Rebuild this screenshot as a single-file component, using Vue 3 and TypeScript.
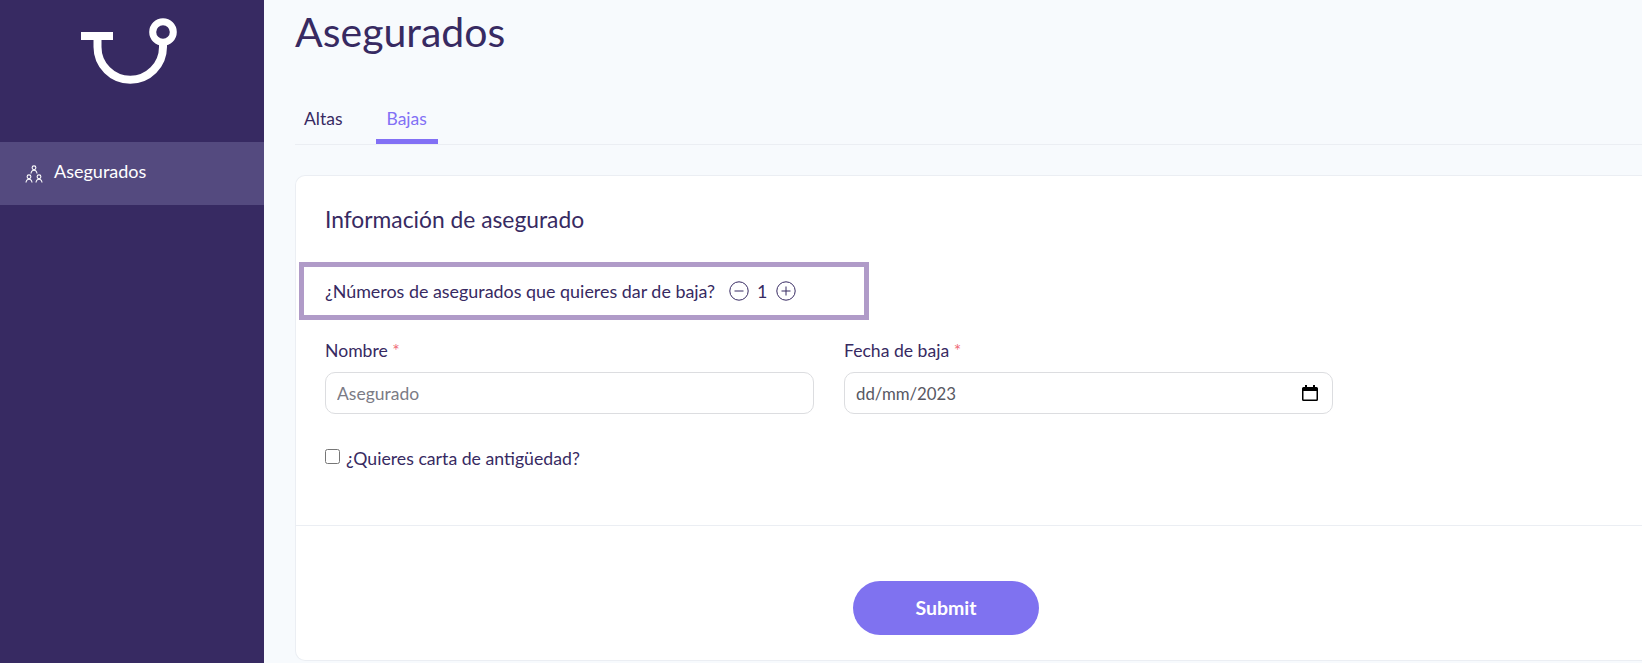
<template>
  <div class="page">
    <aside class="sidebar">
      <div class="logo">
        <svg width="100" height="90" viewBox="0 0 100 90" fill="none">
          <path d="M1 28h32v8H1z" fill="#fff" />
          <path d="M17.500 32v11a32.750 32.750 0 0 0 65.500 0V28" stroke="#fff" stroke-width="8" />
          <circle cx="83" cy="28" r="10.300" stroke="#fff" stroke-width="7" fill="#372a62" />
        </svg>
      </div>
      <a class="nav-item">
        <svg class="nav-icon" width="20" height="20" viewBox="0 0 20 20" fill="none" stroke="#fff" stroke-width="1.100">
          <circle cx="10" cy="3.800" r="1.900" />
          <path d="M7 9.500c.2-2 1.300-3.300 3-3.300s2.800 1.300 3 3.300" />
          <circle cx="5" cy="12.800" r="1.900" />
          <path d="M2 18.500c.2-2 1.300-3.300 3-3.300s2.800 1.300 3 3.300" />
          <circle cx="15" cy="12.800" r="1.900" />
          <path d="M12 18.500c.2-2 1.300-3.300 3-3.300s2.800 1.300 3 3.300" />
        </svg>
        <span>Asegurados</span>
      </a>
    </aside>

    <main class="content">
      <h1 class="titulo">Asegurados</h1>

      <nav class="tabs">
        <a
          v-for="tab in tabs"
          :key="tab"
          class="tab"
          :class="{ activa: tab === tabActiva }"
          @click="tabActiva = tab"
        >
          {{ tab }}
        </a>
      </nav>

      <section class="card">
        <h2 class="card-titulo">Información de asegurado</h2>

        <div class="contador">
          <span>¿Números de asegurados que quieres dar de baja?</span>
          <button class="circulo" type="button" @click="restar">
            <svg width="20" height="20" viewBox="0 0 20 20" fill="none" stroke="#372a62" stroke-width="1">
              <circle cx="10" cy="10" r="9.200" />
              <path d="M5.500 10h9" />
            </svg>
          </button>
          <span class="numero">{{ cantidad }}</span>
          <button class="circulo" type="button" @click="cantidad++">
            <svg width="20" height="20" viewBox="0 0 20 20" fill="none" stroke="#372a62" stroke-width="1">
              <circle cx="10" cy="10" r="9.200" />
              <path d="M5.500 10h9M10 5.500v9" />
            </svg>
          </button>
        </div>

        <div class="campos">
          <label class="campo">
            <span class="etiqueta">Nombre <i>*</i></span>
            <input class="entrada" type="text" placeholder="Asegurado" />
          </label>
          <label class="campo">
            <span class="etiqueta">Fecha de baja <i>*</i></span>
            <span class="entrada fecha">
              <input type="text" value="dd/mm/2023" />
              <svg width="16" height="16" viewBox="0 0 16 16">
                <path d="M3 0h2v2h6V0h2v2h1.500A1.500 1.500 0 0 1 16 3.500v11a1.500 1.500 0 0 1-1.500 1.500h-13A1.500 1.500 0 0 1 0 14.500v-11A1.500 1.500 0 0 1 1.500 2H3zM1.500 6v8.500h13V6z" fill="#000" />
              </svg>
            </span>
          </label>
        </div>

        <label class="check">
          <input type="checkbox" />
          <span>¿Quieres carta de antigüedad?</span>
        </label>

        <div class="pie">
          <button class="enviar" type="button">Submit</button>
        </div>
      </section>
    </main>
  </div>
</template>

<script setup lang="ts">
import { ref } from "vue"

const tabs = ["Altas", "Bajas"]
const tabActiva = ref("Bajas")
const cantidad = ref(1)

function restar() {
  if (cantidad.value > 1) cantidad.value--
}
</script>

<style>
html,
body {
  margin: 0;
  overflow: hidden;
}
</style>

<style scoped>
.page {
  display: flex;
  width: 1642px;
  height: 663px;
  overflow: hidden;
  background: #f7fafd;
  font-family: Lato, "Open Sans", sans-serif;
  color: #372a62;
}

.sidebar {
  flex: 0 0 264px;
  background: #372a62;
}

.logo {
  height: 142px;
  box-sizing: border-box;
  padding: 4px 0 0 80px;
}

.nav-item {
  display: flex;
  align-items: center;
  gap: 10px;
  height: 63px;
  padding-left: 24px;
  background: #544a7f;
  color: #fff;
  font-size: 18px;
}

.nav-item span {
  margin-bottom: 5px;
}

.content {
  flex: 1;
  min-width: 0;
  padding-left: 31px;
}

.titulo {
  margin: 0;
  height: 66px;
  font-size: 41px;
  line-height: 64px;
  font-weight: 400;
}

.tabs {
  display: flex;
  height: 79px;
  box-sizing: border-box;
  padding-top: 37px;
  border-bottom: 1px solid #ebeef3;
}

.tab {
  display: block;
  height: 41px;
  box-sizing: border-box;
  padding: 0 11px;
  margin-right: 22px;
  font-size: 17.500px;
  line-height: 32px;
}

.tab:first-child {
  margin-left: -2px;
}

.tab.activa {
  color: #8270f5;
  border-bottom: 5px solid #8270f5;
}

.card {
  margin-top: 30px;
  height: 486px;
  box-sizing: border-box;
  padding-top: 29px;
  background: #fff;
  border: 1px solid #ebeef3;
  border-right: none;
  border-radius: 10px 0 0 10px;
}

.card-titulo {
  margin: 0 0 29px 29px;
  font-size: 22.800px;
  line-height: 28px;
  font-weight: 400;
}

.contador {
  display: flex;
  align-items: center;
  width: 570px;
  height: 58px;
  box-sizing: border-box;
  margin-left: 3px;
  padding-left: 21px;
  border: 5px solid #b09bc8;
  font-size: 17.900px;
}

.circulo {
  display: flex;
  padding: 0;
  border: none;
  background: none;
  cursor: pointer;
}

.contador span:first-child {
  margin-right: 14px;
}

.numero {
  margin: 0 8px 0 8px;
}

.campos {
  display: flex;
  gap: 30px;
  margin: 20px 0 0 29px;
}

.campo {
  display: flex;
  flex-direction: column;
  width: 489px;
}

.etiqueta {
  height: 32px;
  font-size: 17.600px;
  line-height: 22px;
}

.etiqueta i {
  font-style: normal;
  color: #ef6d7a;
}

.entrada {
  width: 100%;
  height: 42px;
  box-sizing: border-box;
  padding: 0 11px;
  border: 1px solid #dcdde0;
  border-radius: 10px;
  background: #fff;
  font: 17.500px Lato, "Open Sans", sans-serif;
  color: #6b6b78;
  outline: none;
}

.entrada::placeholder {
  color: #7b7b85;
}

.fecha {
  display: flex;
  align-items: center;
  padding: 0 14px 0 11px;
  font-size: 16.800px;
}

.fecha input {
  flex: 1;
  min-width: 0;
  padding: 0;
  border: none;
  font: inherit;
  color: #585863;
  outline: none;
}

.check {
  display: flex;
  align-items: center;
  gap: 6px;
  margin: 34px 0 0 29px;
  font-size: 17.700px;
}

.check input {
  width: 15px;
  height: 15px;
  margin: 0 0 5px;
}

.pie {
  margin-top: 56px;
  padding: 55px 0 0 557px;
  border-top: 1px solid #ebeef3;
}

.enviar {
  display: block;
  width: 186px;
  height: 54px;
  padding-bottom: 3px;
  border: none;
  border-radius: 27px;
  background: #7f72f0;
  color: #fff;
  font: 700 19.500px Lato, "Open Sans", sans-serif;
  cursor: pointer;
}
</style>
